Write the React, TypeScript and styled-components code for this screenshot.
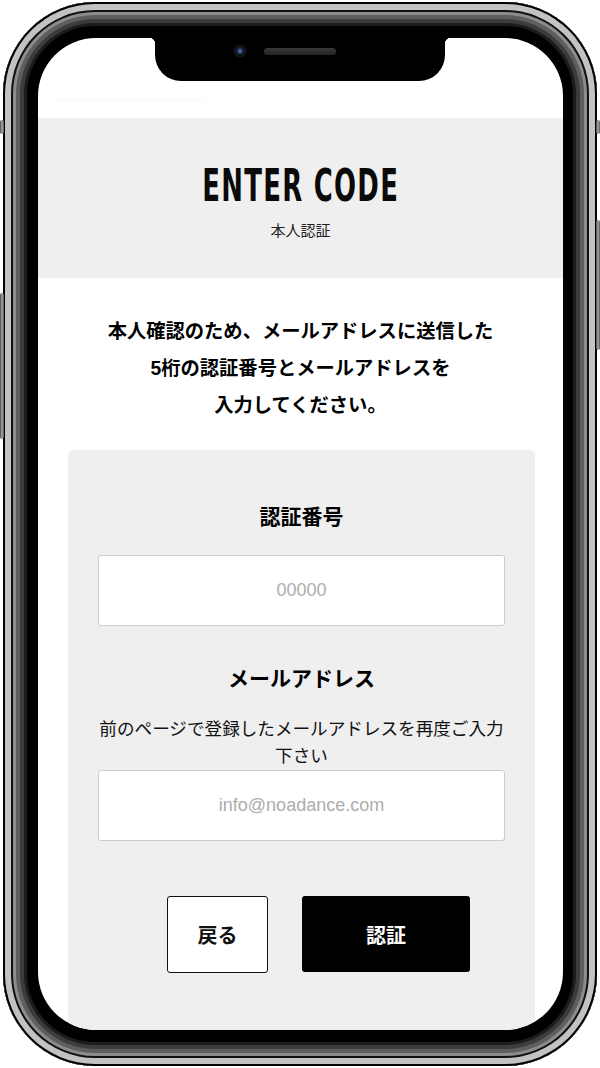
import * as React from 'react';
import styled, { createGlobalStyle } from 'styled-components';

const GlobalStyle = createGlobalStyle`
  html, body {
    margin: 0;
    padding: 0;
    background: #ffffff;
  }
  body {
    font-family: "Liberation Sans", "Noto Sans CJK JP", sans-serif;
    color: #000;
  }
  * {
    box-sizing: border-box;
  }
`;

const Page = styled('div')`
  width: 600px;
  height: 1068px;
  padding: 2px 3px 2px 3px;
  position: relative;
`;

const SideButton = styled('div')<{ $side: 'left' | 'right'; $top: number; $height: number }>`
  position: absolute;
  ${(p) => (p.$side === 'left' ? 'left: 0;' : 'right: 0;')}
  top: ${(p) => p.$top}px;
  width: 4px;
  height: ${(p) => p.$height}px;
  background: linear-gradient(90deg, #444, #aaa 50%, #555);
  border-radius: 2px;
`;

const Shell = styled('div')`
  width: 594px;
  height: 1064px;
  border-radius: 92px;
  background: #000;
  padding: 36px 34px 36px 35px;
  box-shadow: inset 0 0 0 2px #000, inset 0 0 0 8px #c2c2c2,
    inset 0 0 0 10px #111, inset 0 0 0 13px #8c8c8c,
    inset 0 0 0 17px #5e5e5e, inset 0 0 0 21px #3c3c3c,
    inset 0 0 0 24px #1c1c1c;
`;

const Screen = styled('div')`
  position: relative;
  width: 525px;
  height: 992px;
  border-radius: 58px;
  overflow: hidden;
  background: #ffffff;
`;

const Notch = styled('div')`
  position: absolute;
  top: 0;
  left: 117px;
  width: 290px;
  height: 43px;
  background: #000;
  border-radius: 0 0 26px 26px;
  z-index: 2;

  &::before,
  &::after {
    content: '';
    position: absolute;
    top: 0;
    width: 6px;
    height: 6px;
  }
  &::before {
    left: -6px;
    background: radial-gradient(circle at 0 100%, transparent 6px, #000 6.5px);
  }
  &::after {
    right: -6px;
    background: radial-gradient(circle at 100% 100%, transparent 6px, #000 6.5px);
  }
`;

const Camera = styled('div')`
  position: absolute;
  left: 79px;
  top: 7px;
  width: 12px;
  height: 12px;
  border-radius: 50%;
  background: radial-gradient(circle, #3b5a8c 0 2px, #0d1a33 3px, #111 5px, #2a2a2a 6px);
`;

const Speaker = styled('div')`
  position: absolute;
  left: 109px;
  top: 10px;
  width: 72px;
  height: 7px;
  border-radius: 4px;
  background: linear-gradient(180deg, #3a3a3a, #222);
`;

const StatusArea = styled('div')`
  height: 80px;
  padding: 62px 0 0 20px;
`;

const FaintRule = styled('div')`
  width: 147px;
  height: 1px;
  background: #f6f6f6;
`;

const HeaderBand = styled('header')`
  height: 160px;
  background: #efefef;
  padding-top: 45px;
  text-align: center;
`;

const Title = styled('h1')`
  display: inline-block;
  margin: 0;
  font-family: "DejaVu Sans Condensed", "Liberation Sans", sans-serif;
  font-weight: 700;
  font-size: 45px;
  line-height: 46px;
  letter-spacing: 2px;
  transform: scaleX(0.64);
  color: #0a0a0a;
`;

const Subtitle = styled('div')`
  margin-top: 11px;
  font-family: "Noto Sans CJK JP", sans-serif;
  font-size: 15px;
  line-height: 20px;
  color: #222;
`;

const Intro = styled('p')`
  margin: 0;
  padding-top: 35px;
  font-family: "Liberation Sans", "Noto Sans CJK JP", sans-serif;
  font-weight: 700;
  font-size: 19.3px;
  line-height: 37px;
  text-align: center;
  color: #000;
`;

const Card = styled('section')`
  margin: 26px 28px 0 30px;
  height: 640px;
  background: #efefef;
  border-radius: 5px;
  padding: 50px 30px 0 30px;
  text-align: center;
`;

const FieldLabel = styled('h2')<{ $gap: number }>`
  margin: 0 0 ${(p) => p.$gap}px;
  font-family: "Noto Sans CJK JP", sans-serif;
  font-weight: 700;
  font-size: 21px;
  line-height: 30px;
  color: #000;
`;

const Hint = styled('p')`
  margin: 0 -4px 2px;
  font-family: "Noto Sans CJK JP", sans-serif;
  font-size: 17.6px;
  line-height: 27px;
  color: #111;
`;

const TextInput = styled('input')`
  display: block;
  width: 100%;
  height: 71px;
  border: 1px solid #cdcdcd;
  border-radius: 3px;
  background: #fff;
  font-family: "Liberation Sans", "Noto Sans CJK JP", sans-serif;
  font-size: 18px;
  text-align: center;
  outline: none;

  &::placeholder {
    color: #adadad;
  }
`;

const Field = styled('div')<{ $mb: number }>`
  margin-bottom: ${(p) => p.$mb}px;
`;

const ButtonRow = styled('div')`
  display: flex;
  align-items: flex-start;
  gap: 34px;
  padding-left: 69px;
`;

const Button = styled('button')<{ $primary?: boolean }>`
  height: ${(p) => (p.$primary ? 76 : 77)}px;
  width: ${(p) => (p.$primary ? 168 : 101)}px;
  border: ${(p) => (p.$primary ? 'none' : '1.5px solid #111')};
  border-radius: 3px;
  background: ${(p) => (p.$primary ? '#000' : '#fff')};
  color: ${(p) => (p.$primary ? '#fff' : '#111')};
  font-family: "Noto Sans CJK JP", sans-serif;
  font-weight: 700;
  font-size: 20px;
  cursor: pointer;
`;

export default function App() {
  return (
    <>
      <GlobalStyle />
      <Page>
        <SideButton $side="left" $top={120} $height={14} />
        <SideButton $side="left" $top={293} $height={146} />
        <SideButton $side="right" $top={120} $height={14} />
        <SideButton $side="right" $top={220} $height={130} />
        <Shell>
          <Screen>
            <Notch>
              <Camera />
              <Speaker />
            </Notch>
            <StatusArea>
              <FaintRule />
            </StatusArea>
            <HeaderBand>
              <Title>ENTER CODE</Title>
              <Subtitle>本人認証</Subtitle>
            </HeaderBand>
            <Intro>
              本人確認のため、メールアドレスに送信した
              <br />
              5桁の認証番号とメールアドレスを
              <br />
              入力してください。
            </Intro>
            <Card>
              <Field $mb={36}>
                <FieldLabel $gap={25}>認証番号</FieldLabel>
                <TextInput type="text" placeholder="00000" />
              </Field>
              <Field $mb={55}>
                <FieldLabel $gap={22}>メールアドレス</FieldLabel>
                <Hint>
                  前のページで登録したメールアドレスを再度ご入力
                  <br />
                  下さい
                </Hint>
                <TextInput type="email" placeholder="info@noadance.com" />
              </Field>
              <ButtonRow>
                <Button type="button">戻る</Button>
                <Button type="button" $primary>
                  認証
                </Button>
              </ButtonRow>
            </Card>
          </Screen>
        </Shell>
      </Page>
    </>
  );
}
